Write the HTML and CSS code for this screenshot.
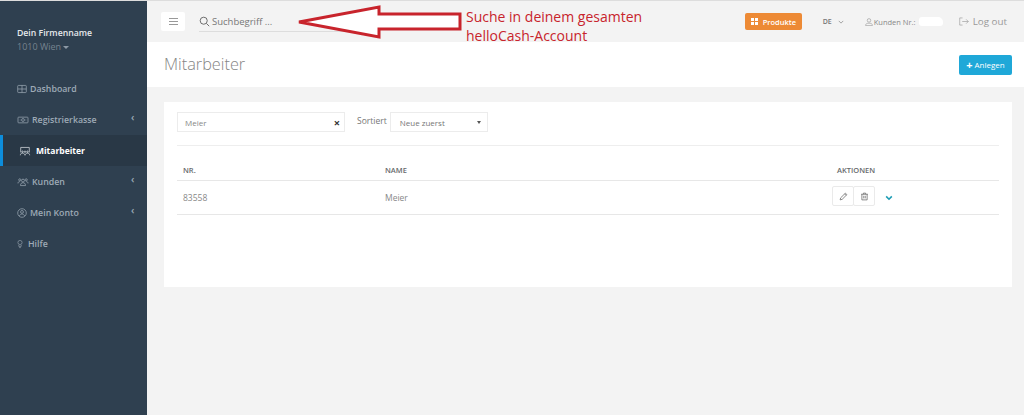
FILE: index.html
```html
<!DOCTYPE html>
<html lang="de">
<head>
  <meta charset="UTF-8">
  <title>Mitarbeiter</title>
  <link rel="stylesheet" href="styles.css">
</head>
<body>
  <aside class="sidebar">
    <div class="company">
      <div class="company-name">Dein Firmenname</div>
      <div class="company-place">1010 Wien<span class="caret"></span></div>
    </div>
    <nav class="menu">
      <a class="menu-item" href="#">
        <svg class="menu-icon" viewBox="0 0 14 14"><rect x="1" y="2" width="12" height="10" rx="1"/><path d="M1 7h12M7 2v10"/></svg>
        Dashboard
      </a>
      <a class="menu-item" href="#">
        <svg class="menu-icon wide" viewBox="0 0 16 14"><rect x="1" y="3" width="14" height="8" rx="1"/><circle cx="8" cy="7" r="2"/><path d="M3.5 7h1M11.500 7h1"/></svg>
        Registrierkasse
        <span class="chevron">‹</span>
      </a>
      <a class="menu-item active" href="#">
        <svg class="menu-icon wide" viewBox="0 0 16 14"><path d="M2 9V2h12v7"/><circle cx="4.500" cy="8" r="1"/><circle cx="8" cy="8" r="1"/><circle cx="11.500" cy="8" r="1"/><path d="M1.500 13c0-2 1-3 3-3s3 1 3.500 3c.5-2 1.500-3 3.500-3s3 1 3 3"/></svg>
        Mitarbeiter
      </a>
      <a class="menu-item" href="#">
        <svg class="menu-icon wide" viewBox="0 0 16 14"><circle cx="8" cy="5" r="2"/><circle cx="3.500" cy="4" r="1.500"/><circle cx="12.500" cy="4" r="1.500"/><path d="M4.500 12c0-3 1.500-4 3.500-4s3.500 1 3.500 4zM1 9c0-2 1-2.500 2.500-2.500M15 9c0-2-1-2.500-2.500-2.500"/></svg>
        Kunden
        <span class="chevron">‹</span>
      </a>
      <a class="menu-item" href="#">
        <svg class="menu-icon" viewBox="0 0 14 14"><circle cx="7" cy="7" r="6"/><circle cx="7" cy="5.500" r="2"/><path d="M3.500 11c.5-2 2-2.500 3.500-2.500s3 .5 3.500 2.500"/></svg>
        Mein Konto
        <span class="chevron">‹</span>
      </a>
      <a class="menu-item" href="#">
        <svg class="menu-icon narrow" viewBox="0 0 10 14"><circle cx="5" cy="4.500" r="3.500"/><path d="M3 8.500v2.500h4V8.500M3.500 13h3"/></svg>
        Hilfe
      </a>
    </nav>
  </aside>

  <div class="main">
    <header class="topbar">
      <button class="burger"><span></span><span></span><span></span></button>
      <div class="search">
        <svg class="search-icon" viewBox="0 0 14 14"><circle cx="6" cy="6" r="4.500"/><path d="M9.500 9.500 13 13"/></svg>
        Suchbegriff ...
      </div>
      <div class="top-right">
        <a class="btn-products" href="#">
          <svg class="grid-icon" viewBox="0 0 10 10"><path d="M0 0h4.300v4.300H0zM5.700 0H10v4.300H5.700zM0 5.700h4.300V10H0zM5.700 5.700H10V10H5.700z"/></svg>
          Produkte
        </a>
        <span class="lang">DE
          <svg class="lang-arrow" viewBox="0 0 8 5"><path d="M1 1l3 3 3-3"/></svg>
        </span>
        <span class="customer">
          <svg class="user-icon" viewBox="0 0 10 10"><circle cx="5" cy="3" r="2.200"/><path d="M.8 9.500c0-2.500 1.500-3 4.200-3s4.200.5 4.200 3z"/></svg>
          Kunden Nr.:<span class="redacted"></span>
        </span>
        <a class="logout" href="#">
          <svg class="logout-icon" viewBox="0 0 14 12"><path d="M5 1H1v10h4M4.500 6H13M10 3l3 3-3 3"/></svg>
          Log out
        </a>
      </div>
    </header>

    <div class="title-band">
      <h1>Mitarbeiter</h1>
      <a class="btn-add" href="#"><b>+</b> Anlegen</a>
    </div>

    <section class="content">
      <div class="card">
        <div class="filters">
          <div class="filter-input">Meier<span class="clear">×</span></div>
          <label class="sort-label">Sortiert</label>
          <div class="sort-select">Neue zuerst<span class="select-arrow"></span></div>
        </div>
        <table class="staff">
          <thead>
            <tr><th class="col-nr">Nr.</th><th class="col-name">Name</th><th>Aktionen</th></tr>
          </thead>
          <tbody>
            <tr>
              <td>83558</td>
              <td>Meier</td>
              <td>
                <div class="actions">
                  <button class="act-btn">
                    <svg viewBox="0 0 12 12"><path d="M1.500 10.500l.7-2.700L8.500 1.500l2 2-6.300 6.300zM7.500 2.500l2 2"/></svg>
                  </button>
                  <button class="act-btn">
                    <svg viewBox="0 0 12 12"><path d="M1.500 3h9M4.500 3V1.500h3V3M2.500 3v7.500h7V3M5 5v3.500M7 5v3.500"/></svg>
                  </button>
                  <svg class="expand" viewBox="0 0 10 7"><path d="M1.500 1.500 5 5l3.500-3.500"/></svg>
                </div>
              </td>
            </tr>
          </tbody>
        </table>
      </div>
    </section>
  </div>

  <!-- annotation drawn on top of the screenshot -->
  <svg class="note-arrow" viewBox="0 0 168 36"><path d="M3 18 83 3v7h81v15H83v8z"/></svg>
  <div class="note-text">Suche in deinem gesamten<br>helloCash-Account</div>
</body>
</html>
```

FILE: styles.css
```css
* {
  box-sizing: border-box;
}

html, body {
  height: 100%;
}

body {
  margin: 0;
  display: flex;
  height: 415px;
  overflow: hidden;
  background-color: #f3f3f3;
  color: #777;
  font-family: 'Open Sans', sans-serif;
  font-size: 9px;
  position: relative;
}

a {
  text-decoration: none;
  color: inherit;
}

button {
  font: inherit;
  cursor: pointer;
}

/* sidebar */
.sidebar {
  width: 147px;
  flex-shrink: 0;
  background-color: #2f4050;
  border-top: 1px solid #ddd;
}

.company {
  padding: 26px 17px 0;
  height: 72px;
}

.company-name {
  color: #e6e9ec;
  font-size: 8.700px;
  font-weight: 600;
  line-height: 13px;
}

.company-place {
  color: #76838f;
  font-size: 9px;
  line-height: 13px;
}

.caret {
  display: inline-block;
  margin-left: 2px;
  vertical-align: middle;
  border-left: 3px solid transparent;
  border-right: 3px solid transparent;
  border-top: 3px solid #8d99a5;
}

.menu-item {
  display: flex;
  align-items: center;
  height: 31px;
  padding-left: 17px;
  color: #9eaab6;
  font-size: 8.800px;
  font-weight: 600;
  position: relative;
}

.menu-icon {
  width: 10px;
  height: 10px;
  margin-right: 3px;
  fill: none;
  stroke: #9eaab6;
  stroke-width: 1;
}

.menu-icon.wide {
  width: 12px;
}

.menu-icon.narrow {
  width: 6px;
  margin-right: 5px;
}

.chevron {
  position: absolute;
  left: 131px;
  top: 7px;
  font-size: 10px;
  line-height: 12px;
}

.menu-item.active {
  background-color: #293846;
  border-left: 3px solid #0d8ddb;
  padding-left: 16px;
  color: #fff;
  font-size: 8.500px;
  font-weight: 700;
}

.menu-item.active .menu-icon {
  stroke: #dfe4e8;
  margin-right: 5px;
}

/* top bar */
.main {
  flex: 1;
  display: flex;
  flex-direction: column;
  min-width: 0;
}

.topbar {
  height: 42px;
  display: flex;
  align-items: center;
  padding: 0 17px 0 14px;
  border-top: 1px solid #ddd;
}

.burger {
  width: 24px;
  height: 19px;
  display: flex;
  flex-direction: column;
  justify-content: center;
  align-items: center;
  gap: 2px;
  background-color: #fff;
  border: none;
  border-radius: 2px;
  padding: 0;
}

.burger span {
  display: block;
  width: 9px;
  height: 1px;
  background-color: #999;
}

.search {
  width: 165px;
  height: 20px;
  margin-left: 14px;
  display: flex;
  align-items: center;
  gap: 2px;
  border-bottom: 1px solid #ddd;
  color: #777;
  font-size: 9.500px;
}

.search-icon {
  width: 11px;
  height: 11px;
  fill: none;
  stroke: #666;
  stroke-width: 1.200;
}

.top-right {
  margin-left: auto;
  display: flex;
  align-items: center;
}

.btn-products {
  display: flex;
  align-items: center;
  gap: 5px;
  width: 57px;
  height: 17px;
  padding-left: 6px;
  background-color: #ed8a35;
  border-radius: 2px;
  color: #fff;
  font-size: 7.500px;
  font-weight: 600;
}

.grid-icon {
  width: 7px;
  height: 7px;
  fill: #fff;
}

.lang {
  display: flex;
  align-items: center;
  margin-left: 21px;
  color: #777;
  font-size: 7px;
  font-weight: 600;
}

.lang-arrow {
  width: 6px;
  height: 4px;
  margin-left: 6px;
  fill: none;
  stroke: #888;
  stroke-width: 1;
}

.customer {
  display: flex;
  align-items: center;
  margin-left: 21px;
  width: 94px;
  color: #888;
  font-size: 7.500px;
}

.user-icon {
  width: 8px;
  height: 8px;
  margin-right: 1px;
  fill: none;
  stroke: #999;
  stroke-width: .8;
}

.redacted {
  display: block;
  width: 24px;
  height: 9px;
  margin-left: 3px;
  background-color: #fff;
  border-radius: 3px 5px 3px 3px;
}

.logout {
  display: flex;
  align-items: center;
  gap: 4px;
  color: #999;
  font-size: 9.800px;
}

.logout-icon {
  width: 10px;
  height: 9px;
  fill: none;
  stroke: #999;
  stroke-width: .9;
}

/* page title */
.title-band {
  height: 45px;
  display: flex;
  justify-content: space-between;
  align-items: center;
  padding: 0 12px 0 17px;
  background-color: #fff;
}

.title-band h1 {
  margin: 0 0 2px;
  color: #858585;
  font-size: 16.300px;
  font-weight: 300;
}

.btn-add {
  width: 53px;
  height: 20px;
  display: flex;
  align-items: center;
  justify-content: center;
  gap: 2px;
  background-color: #1fa8d8;
  border-radius: 2px;
  color: #fff;
  font-size: 8px;
}

.btn-add b {
  font-size: 11px;
  line-height: 11px;
}

/* card */
.content {
  flex: 1;
  padding: 15px 12px 0 17px;
}

.card {
  height: 185px;
  padding: 10px 13px 0;
  background-color: #fff;
}

.filters {
  display: flex;
  align-items: flex-start;
  height: 33px;
  border-bottom: 1px solid #eee;
  box-sizing: content-box;
}

.filter-input {
  width: 168px;
  height: 20px;
  display: flex;
  align-items: center;
  justify-content: space-between;
  padding: 0 4px 0 7px;
  border: 1px solid #ececec;
  font-size: 8px;
  color: #888;
}

.clear {
  color: #333;
  font-size: 11px;
  font-weight: 700;
}

.sort-label {
  margin-left: 12px;
  line-height: 18px;
  font-size: 8.500px;
  color: #777;
}

.sort-select {
  width: 98px;
  height: 20px;
  margin-left: 3px;
  display: flex;
  align-items: center;
  justify-content: space-between;
  padding: 0 6px 0 9px;
  border: 1px solid #ececec;
  font-size: 8px;
  color: #777;
}

.select-arrow {
  border-left: 2px solid transparent;
  border-right: 2px solid transparent;
  border-top: 3px solid #555;
}

.staff {
  width: 100%;
  margin-top: 10px;
  border-collapse: collapse;
  table-layout: fixed;
}

.staff th {
  height: 24px;
  padding: 0 6px 5px;
  vertical-align: bottom;
  text-align: left;
  text-transform: uppercase;
  border-bottom: 1px solid #e7e7e7;
  color: #676a6c;
  font-size: 7.500px;
  font-weight: 600;
}

.staff .col-nr {
  width: 202px;
}

.staff .col-name {
  width: 452px;
}

.staff td {
  height: 34px;
  padding: 0 6px;
  border-bottom: 1px solid #e7e7e7;
  color: #888;
  font-size: 8.500px;
}

.actions {
  display: flex;
  align-items: center;
  margin-left: -5px;
  margin-top: -2px;
}

.act-btn {
  width: 22px;
  height: 20px;
  padding: 0;
  display: flex;
  align-items: center;
  justify-content: center;
  background-color: #fff;
  border: 1px solid #eaeaea;
  border-radius: 2px;
}

.act-btn + .act-btn {
  margin-left: -1px;
}

.act-btn svg {
  width: 9px;
  height: 9px;
  fill: none;
  stroke: #666;
  stroke-width: 1;
}

.expand {
  width: 8px;
  height: 6px;
  margin-left: 10px;
  margin-top: 3px;
  fill: none;
  stroke: #1c9cb4;
  stroke-width: 2;
}

/* red annotation over the page */
.note-arrow {
  position: absolute;
  left: 296px;
  top: 4px;
  width: 168px;
  height: 36px;
  fill: #fff;
  stroke: #c8242c;
  stroke-width: 3;
}

.note-text {
  position: absolute;
  left: 466px;
  top: 7px;
  color: #c8242c;
  font-family: 'Open Sans', sans-serif;
  font-size: 14px;
  line-height: 19px;
}
```
